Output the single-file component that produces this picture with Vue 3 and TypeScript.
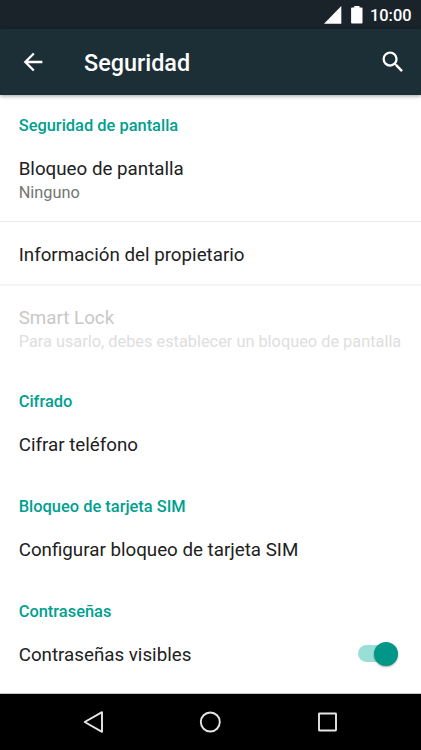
<script setup lang="ts">
interface Item {
  title: string
  summary?: string
  disabled?: boolean
  checked?: boolean
}
interface Section {
  heading: string
  items: Item[]
}

const sections: Section[] = [
  {
    heading: 'Seguridad de pantalla',
    items: [
      { title: 'Bloqueo de pantalla', summary: 'Ninguno' },
      { title: 'Información del propietario' },
      {
        title: 'Smart Lock',
        summary: 'Para usarlo, debes establecer un bloqueo de pantalla',
        disabled: true,
      },
    ],
  },
  { heading: 'Cifrado', items: [{ title: 'Cifrar teléfono' }] },
  { heading: 'Bloqueo de tarjeta SIM', items: [{ title: 'Configurar bloqueo de tarjeta SIM' }] },
  { heading: 'Contraseñas', items: [{ title: 'Contraseñas visibles', checked: true }] },
]
</script>

<template>
  <div class="screen">
    <div class="status">
      <svg class="signal" width="18" height="18" viewBox="0 0 18 18"><path d="M0 17.7 17.3 0v17.7z" fill="#fff" /></svg>
      <svg class="battery" width="12" height="18" viewBox="0 0 12 18"><path d="M3.2 0h5.3v1.5h2.2q.8 0 .8.8v14.4q0 .8-.8.8H.9q-.8 0-.8-.8V2.300q0-.8.8-.8h2.300z" fill="#fff" /></svg>
      <span class="clock">10:00</span>
    </div>
    <header class="toolbar">
      <svg class="back" width="28" height="28" viewBox="0 0 24 24"><path d="M20 11H7.830l5.590-5.590L12 4l-8 8 8 8 1.410-1.410L7.830 13H20v-2z" fill="#fff" /></svg>
      <h1>Seguridad</h1>
      <svg class="search" width="28" height="28" viewBox="0 0 24 24"><path d="M15.500 14h-.79l-.28-.27A6.471 6.471 0 0 0 16 9.500 6.500 6.500 0 1 0 9.500 16c1.610 0 3.090-.59 4.230-1.570l.27.28v.79l5 4.990L20.490 19l-4.990-5zm-6 0C7.010 14 5 11.990 5 9.500S7.010 5 9.500 5 14 7.010 14 9.500 11.990 14 9.500 14z" fill="#fff" /></svg>
    </header>
    <main>
      <section v-for="section in sections" :key="section.heading">
        <h2>{{ section.heading }}</h2>
        <div
          v-for="item in section.items"
          :key="item.title"
          class="row"
          :class="{ tall: item.summary, disabled: item.disabled }"
        >
          <div class="label">
            <div class="title">{{ item.title }}</div>
            <div v-if="item.summary" class="summary">{{ item.summary }}</div>
          </div>
          <div v-if="item.checked" class="switch"><span class="thumb"></span></div>
        </div>
      </section>
    </main>
    <nav>
      <svg width="24" height="24" viewBox="0 0 24 24"><path d="M21 2.200v19.600L3.700 12z" /></svg>
      <svg width="24" height="24" viewBox="0 0 24 24"><circle cx="12.300" cy="12" r="9.500" /></svg>
      <svg width="24" height="24" viewBox="0 0 24 24"><rect x="4" y="3.500" width="17" height="17" rx=".4" /></svg>
    </nav>
  </div>
</template>

<style>
body {
  background: #fff;
}
</style>

<style scoped>
.screen {
  width: 421px;
  height: 750px;
  display: flex;
  flex-direction: column;
  overflow: hidden;
  background: #fff;
  font-family: Roboto, sans-serif;
  color: #212121;
}
svg {
  display: block;
  flex: none;
}
.status {
  height: 29px;
  flex: none;
  box-sizing: border-box;
  display: flex;
  align-items: center;
  justify-content: flex-end;
  padding: 1px 9.500px 0 0;
  background: #1b232a;
}
.battery {
  margin: 0 7px 0 9px;
}
.clock {
  font-size: 16.370px;
  font-weight: 500;
  line-height: 20px;
  color: #fff;
  padding-top: 2px;
}
.toolbar {
  height: 66px;
  flex: none;
  box-sizing: border-box;
  display: flex;
  align-items: center;
  padding: 0 14px 0 19px;
  background: #1d2f36;
  box-shadow: 0 1px 4px rgba(0, 0, 0, 0.38);
  z-index: 1;
}
h1 {
  margin: 2px 0 0 37px;
  flex: 1;
  font-size: 23.400px;
  font-weight: 500;
  line-height: 28px;
  color: #fff;
}
main {
  flex: 1;
  min-height: 0;
  box-sizing: border-box;
  padding-top: 1px;
  border-bottom: 1px solid #c4c4c4;
  overflow: hidden;
}
h2 {
  margin: 0;
  height: 41px;
  box-sizing: border-box;
  padding: 19px 18.700px 0;
  font-size: 16.430px;
  font-weight: 500;
  line-height: 22px;
  color: #009f8f;
}
.row {
  height: 64px;
  box-sizing: border-box;
  display: flex;
  align-items: center;
  justify-content: space-between;
  padding: 0 23px 0 18.700px;
  white-space: nowrap;
}
.row.tall {
  height: 84px;
  padding-top: 3px;
}
.row + .row {
  height: 63px;
  border-top: 1px solid #e9e9e9;
  padding-top: 4px;
}
.row + .row.tall {
  height: 88px;
  border-top: 2px solid #f4f4f4;
  padding-top: 1px;
}
.title {
  font-size: 18.750px;
  line-height: 24px;
}
.summary {
  font-size: 16.330px;
  line-height: 23px;
  color: #757575;
}
.disabled .title {
  color: #c8c8c8;
}
.disabled .summary {
  color: #dedede;
}
.switch {
  width: 40px;
  height: 17px;
  margin-bottom: 3px;
  display: flex;
  align-items: center;
  justify-content: flex-end;
  background: #99dfd8;
  border-radius: 9px;
}
.thumb {
  width: 24px;
  height: 24px;
  flex: none;
  border-radius: 50%;
  background: #009688;
  box-shadow: 0 1px 2px rgba(0, 0, 0, 0.35);
}
nav {
  height: 56px;
  flex: none;
  box-sizing: border-box;
  display: flex;
  align-items: center;
  justify-content: center;
  gap: 93px;
  padding-right: 1px;
  background: #000;
}
nav svg {
  fill: none;
  stroke: #e6e6e6;
  stroke-width: 1.900;
  stroke-linejoin: round;
}
</style>
